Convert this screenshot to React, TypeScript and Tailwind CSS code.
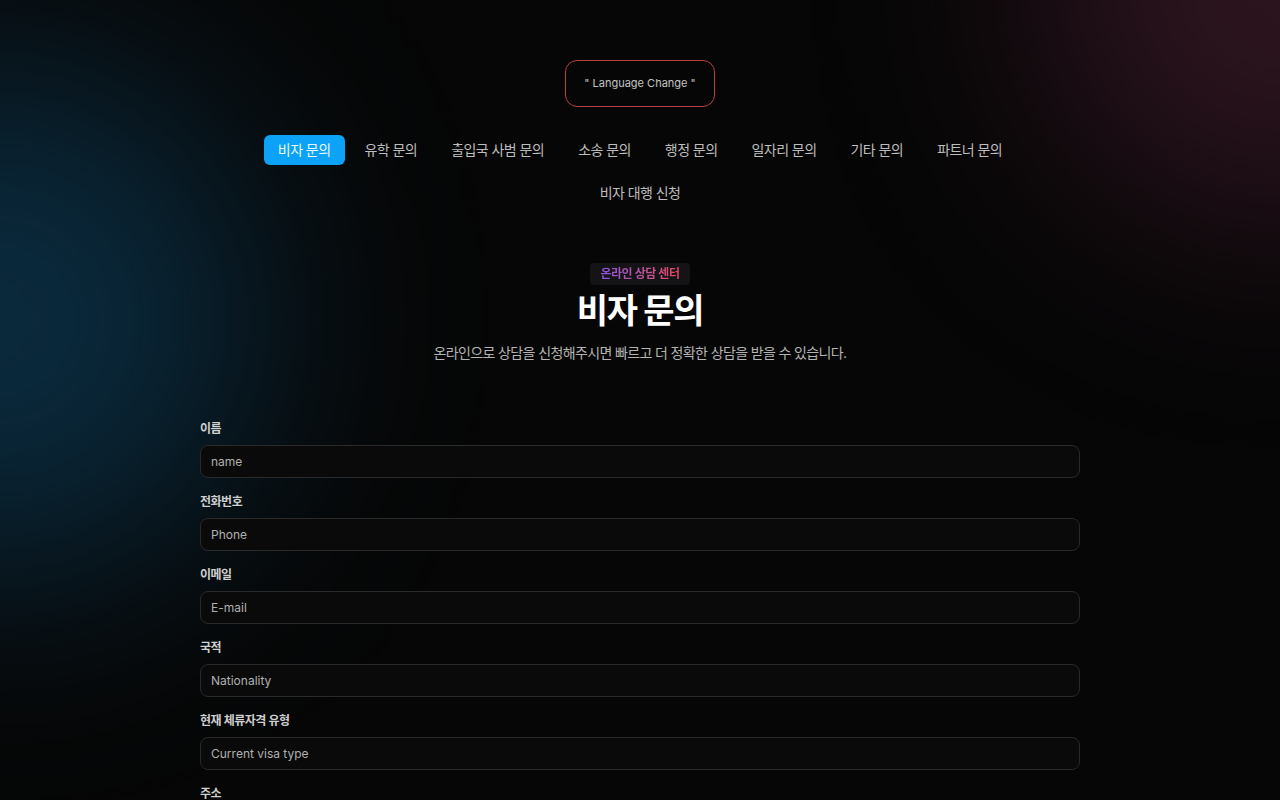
import { useState } from "react";

const tabs = [
  "비자 문의",
  "유학 문의",
  "출입국 사범 문의",
  "소송 문의",
  "행정 문의",
  "일자리 문의",
  "기타 문의",
  "파트너 문의",
  "비자 대행 신청",
];

const fields = [
  { label: "이름", placeholder: "name" },
  { label: "전화번호", placeholder: "Phone" },
  { label: "이메일", placeholder: "E-mail" },
  { label: "국적", placeholder: "Nationality" },
  { label: "현재 체류자격 유형", placeholder: "Current visa type" },
  { label: "주소", placeholder: "Address" },
  { label: "문의 내용", placeholder: "Message" },
];

export default function App() {
  const [active, setActive] = useState(0);

  return (
    <div className="relative min-h-screen overflow-hidden bg-[#060606] font-['Inter','Noto_Sans_CJK_KR',sans-serif] text-gray-300">
      {/* glows */}
      <div className="pointer-events-none absolute -left-[260px] top-[60px] h-[520px] w-[520px] rounded-full bg-[#0c3a55] opacity-70 blur-[110px]" />
      <div className="pointer-events-none absolute -right-[240px] -top-[260px] h-[480px] w-[480px] rounded-full bg-[#4a1f33] opacity-60 blur-[110px]" />

      <div className="relative flex flex-col items-center pt-[60px] pb-20">
        <button className="flex h-[47px] w-[150px] items-center justify-center rounded-xl border border-[#b8413f] text-[11px] text-[#c4c4c4]">
          " Language Change "
        </button>

        <nav className="mt-7 flex max-w-3xl flex-wrap justify-center gap-x-1.5 gap-y-[13px]">
          {tabs.map((t, i) => (
            <button
              key={t}
              onClick={() => setActive(i)}
              className={
                i === active
                  ? "h-[30px] rounded-md bg-[#0ba2f7] px-3.5 text-sm tracking-[-0.04em] text-[#eaf6ff]"
                  : "h-[30px] rounded-md px-3.5 text-sm tracking-[-0.04em] text-[#bdbdbd]"
              }
            >
              {t}
            </button>
          ))}
        </nav>

        <span className="mt-[55px] rounded-sm bg-[#141417] px-2.5 py-[3px] text-xs font-semibold tracking-[-0.04em]">
          <span className="bg-gradient-to-r from-[#8b4fdc] to-[#e8405c] bg-clip-text text-transparent">
            온라인 상담 센터
          </span>
        </span>

        <h1 className="mt-1.5 text-[34px] leading-10 font-bold tracking-[-0.04em] text-white">
          비자 문의
        </h1>

        <p className="mt-3 text-sm tracking-[-0.045em] text-[#b4b4b4]">
          온라인으로 상담을 신청해주시면 빠르고 더 정확한 상담을 받을 수 있습니다.
        </p>

        <form className="mt-[58px] flex w-full max-w-[880px] flex-col gap-4">
          {fields.map((f) => (
            <div key={f.label} className="flex flex-col gap-2">
              <label className="text-xs leading-4 font-semibold tracking-[-0.04em] text-[#cfcfcf]">
                {f.label}
              </label>
              <input
                placeholder={f.placeholder}
                className="h-[33px] rounded-lg border border-[#2a2a2a] bg-[#0a0a0a] px-[10px] text-xs text-gray-200 outline-none placeholder:text-[#b0b0b0]"
              />
            </div>
          ))}
        </form>
      </div>
    </div>
  );
}
